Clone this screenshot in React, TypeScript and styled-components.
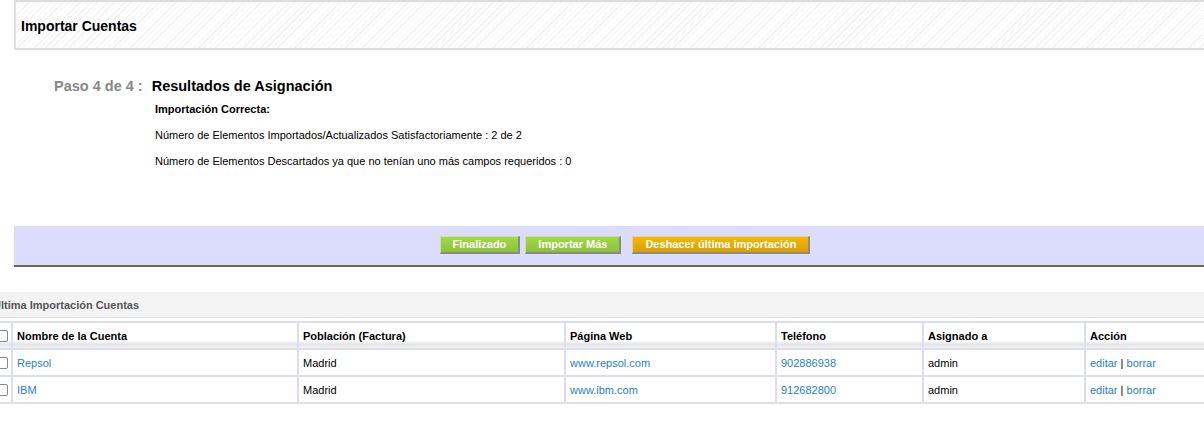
import React from 'react';
import styled, { createGlobalStyle } from 'styled-components';

const GlobalStyle = createGlobalStyle`
  body {
    margin: 0;
    overflow: hidden;
    background: #fff;
    font-family: "Liberation Sans", Arial, sans-serif;
    color: #000;
  }
`;

const Page = styled.div`
  width: 1240px;
`;

const TitleBox = styled.div`
  margin-left: 14px;
  height: 46px;
  border: 2px solid #dddddd;
  border-right: none;
  display: flex;
  align-items: center;
  padding-left: 5px;
  background: repeating-linear-gradient(-45deg, #f3f3f3 0 1px, #ffffff 1px 4px);
`;

const Title = styled.h2`
  margin: 0;
  padding-top: 1px;
  font-size: 14px;
  font-weight: bold;
`;

const Step = styled.div`
  margin-top: 28px;
  padding-left: 54px;
`;

const StepHead = styled.div`
  display: flex;
  align-items: baseline;
  gap: 9px;
  font-size: 14.5px;
  font-weight: bold;
  line-height: 17px;
`;

const StepNum = styled.span`
  color: #888888;
`;

const Details = styled.div`
  margin-left: 101px;
  margin-top: 8px;
  display: flex;
  flex-direction: column;
  gap: 13px;
  font-size: 11px;
  line-height: 13px;
`;

const Line = styled.p<{ $strong?: boolean }>`
  margin: 0;
  font-weight: ${p => (p.$strong ? 'bold' : 'normal')};
`;

const ButtonBar = styled.div`
  margin: 58px 4px 0 14px;
  background: #dcdcfc;
  border-bottom: 2px solid #6b6b4b;
  padding: 10px 0 11px;
  display: flex;
  justify-content: center;
  gap: 5px;
`;

const Button = styled.button<{ $tone: 'green' | 'orange'; $gapLeft?: number }>`
  height: 18px;
  padding: 0 12px;
  margin-left: ${p => p.$gapLeft ?? 0}px;
  font-family: inherit;
  font-size: 11px;
  font-weight: bold;
  color: #fff;
  border: none;
  border-top: 1px solid ${p => (p.$tone === 'green' ? '#c4e88a' : '#f4d36a')};
  border-left: 1px solid ${p => (p.$tone === 'green' ? '#c4e88a' : '#f4d36a')};
  border-right: 2px solid #8a8a8a;
  border-bottom: 2px solid #8a8a8a;
  background: ${p =>
    p.$tone === 'green'
      ? 'linear-gradient(#a4d84a, #8cc23a)'
      : 'linear-gradient(#f0b80a, #dca000)'};
  line-height: 15px;
  cursor: pointer;
`;

const ListSection = styled.div`
  margin-top: 25px;
  margin-left: -9px;
`;

const ListHead = styled.div`
  height: 25px;
  background: #f3f3f3;
  border-bottom: 1px solid #dddddd;
  display: flex;
  align-items: center;
  padding-left: 2px;
  font-size: 11px;
  font-weight: bold;
  color: #555;
`;

const Table = styled.table`
  margin-top: 3px;
  border-collapse: collapse;
  table-layout: fixed;
  width: 1240px;
  font-size: 11px;
`;

const Th = styled.th`
  height: 25px;
  padding: 0 4px;
  text-align: left;
  font-weight: bold;
  border: 2px solid #dcdcf8;
  background: linear-gradient(#ffffff 0, #ffffff 70%, #e4e4e4 85%, #f4f4f4 100%);
`;

const Td = styled.td`
  height: 25px;
  padding: 0 4px;
  border: 2px solid #dcdcf8;
  border-top-width: 1px;
`;

const Check = styled.span`
  display: inline-block;
  width: 9px;
  height: 10px;
  border: 1px solid #8a8a8a;
  border-radius: 2px;
  background: #fff;
  vertical-align: middle;
`;

const A = styled.a`
  color: #1f7fd0;
  text-decoration: none;
`;

const cols = [20, 286, 267, 211, 147, 162, 147];

const rows = [
  { name: 'Repsol', city: 'Madrid', web: 'www.repsol.com', phone: '902886938', user: 'admin' },
  { name: 'IBM', city: 'Madrid', web: 'www.ibm.com', phone: '912682800', user: 'admin' },
];

export default function App() {
  return (
    <Page>
      <GlobalStyle />
      <TitleBox>
        <Title>Importar Cuentas</Title>
      </TitleBox>

      <Step>
        <StepHead>
          <StepNum>Paso 4 de 4 :</StepNum>
          <span>Resultados de Asignación</span>
        </StepHead>
        <Details>
          <Line $strong>Importación Correcta:</Line>
          <Line>Número de Elementos Importados/Actualizados Satisfactoriamente : 2 de 2</Line>
          <Line>Número de Elementos Descartados ya que no tenían uno más campos requeridos : 0</Line>
        </Details>
      </Step>

      <ButtonBar>
        <Button $tone="green">Finalizado</Button>
        <Button $tone="green">Importar Más</Button>
        <Button $tone="orange" $gapLeft={6}>Deshacer última importación</Button>
      </ButtonBar>

      <ListSection>
        <ListHead>Última Importación Cuentas</ListHead>
        <Table>
          <colgroup>
            {cols.map((w, i) => (
              <col key={i} style={{ width: w }} />
            ))}
          </colgroup>
          <thead>
            <tr>
              <Th>
                <Check />
              </Th>
              <Th>Nombre de la Cuenta</Th>
              <Th>Población (Factura)</Th>
              <Th>Página Web</Th>
              <Th>Teléfono</Th>
              <Th>Asignado a</Th>
              <Th>Acción</Th>
            </tr>
          </thead>
          <tbody>
            {rows.map(r => (
              <tr key={r.name}>
                <Td>
                  <Check />
                </Td>
                <Td>
                  <A href="#">{r.name}</A>
                </Td>
                <Td>{r.city}</Td>
                <Td>
                  <A href="#">{r.web}</A>
                </Td>
                <Td>
                  <A href="#">{r.phone}</A>
                </Td>
                <Td>{r.user}</Td>
                <Td>
                  <A href="#">editar</A> | <A href="#">borrar</A>
                </Td>
              </tr>
            ))}
          </tbody>
        </Table>
      </ListSection>
    </Page>
  );
}
